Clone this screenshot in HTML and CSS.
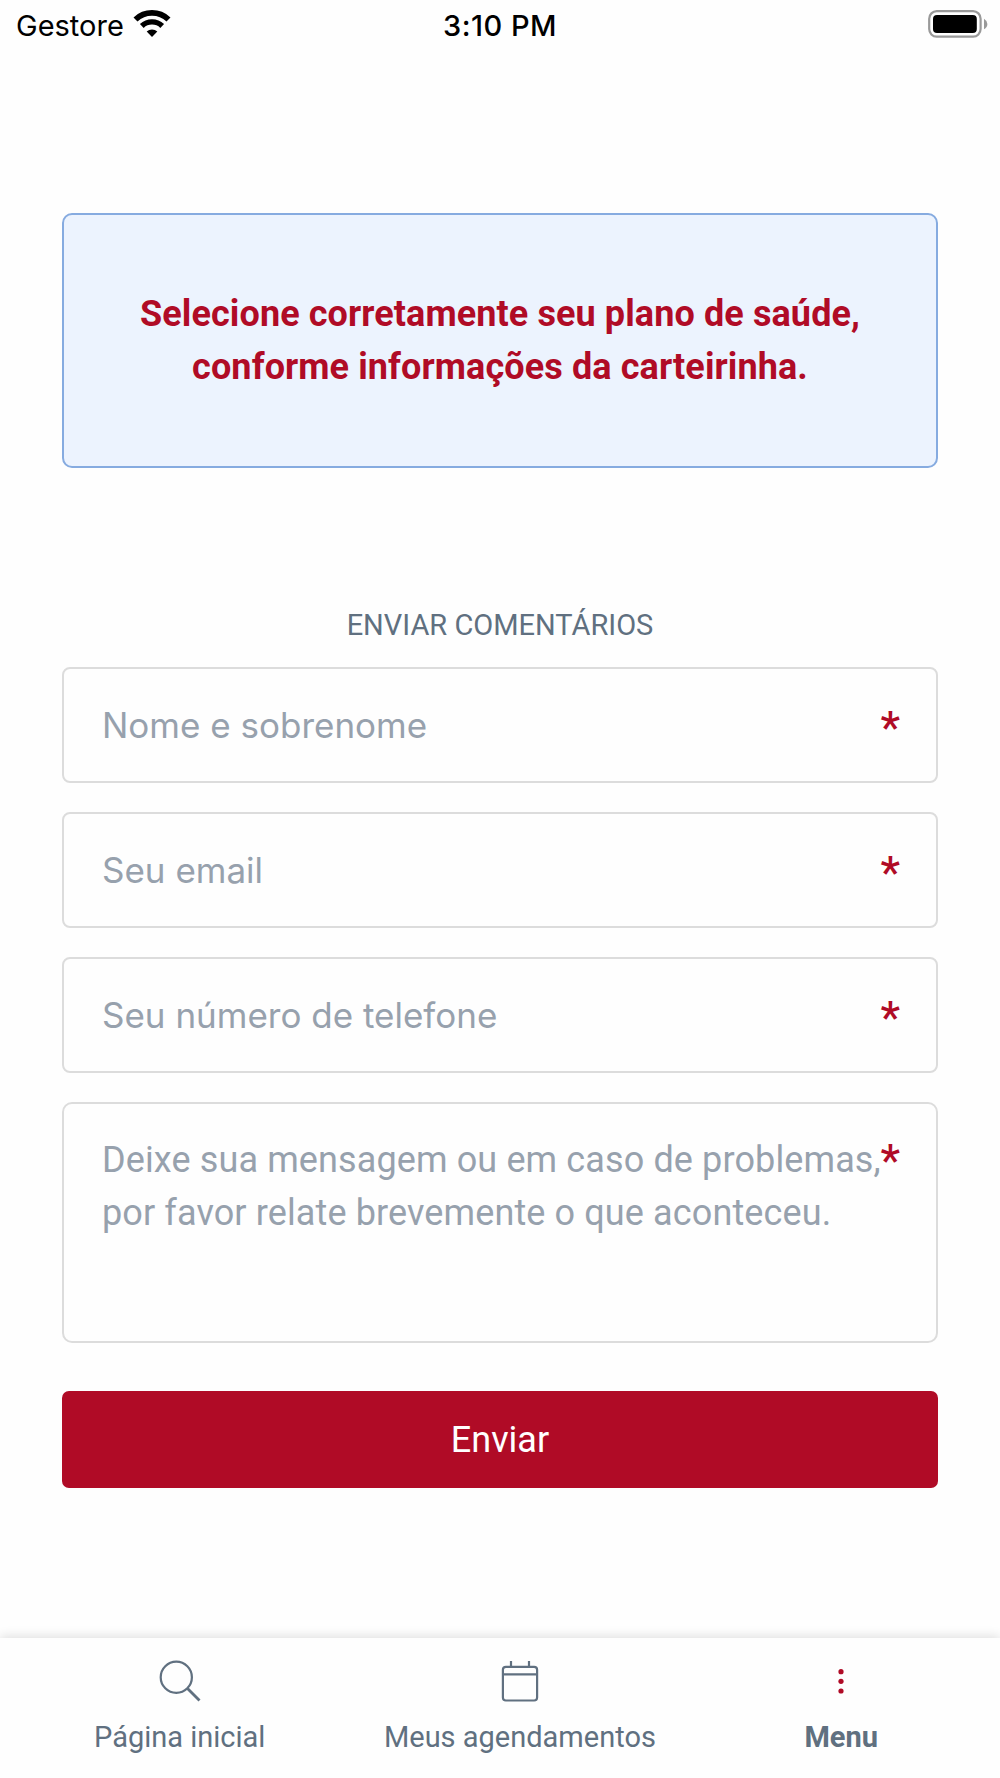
FILE: index.html
```html
<!DOCTYPE html>
<html lang="pt-BR">
<head>
    <meta charset="UTF-8">
    <meta name="viewport" content="width=device-width, initial-scale=1.0">
    <title>Enviar comentários</title>
    <link rel="stylesheet" href="styles.css">
</head>
<body>
    <div class="screen">
        <header class="status">
            <div class="carrier">
                <span>Gestore</span>
                <svg class="wifi" viewBox="0 0 38 28">
                    <path d="M2.5 9.5 A24 24 0 0 1 35.5 9.5" fill="none" stroke="#000" stroke-width="5.8"/>
                    <path d="M8.8 16 A14.8 14.8 0 0 1 29.2 16" fill="none" stroke="#000" stroke-width="5.4"/>
                    <path d="M13.7 21.6 A7.6 7.6 0 0 1 24.3 21.6 L19 27 Z"/>
                </svg>
            </div>
            <div class="time">3:10 PM</div>
            <svg class="battery" viewBox="0 0 60 28">
                <rect x="1.2" y="1.2" width="51.4" height="25.4" rx="7.5" fill="#fff" stroke="#999" stroke-width="2.2"/>
                <rect x="5" y="5" width="43.8" height="18" rx="4" fill="#000"/>
                <path d="M56 8.8 Q59.4 11 59.4 13.9 Q59.4 17 56 19.2 Z" fill="#999"/>
            </svg>
        </header>
        <main class="content">
            <div class="alert">
                <p>Selecione corretamente seu plano de saúde,<br>conforme informações da carteirinha.</p>
            </div>
            <form class="form">
                <h1 class="title">ENVIAR COMENTÁRIOS</h1>
                <div class="field">
                    <input type="text" placeholder="Nome e sobrenome">
                    <span class="required">*</span>
                </div>
                <div class="field">
                    <input type="text" placeholder="Seu email">
                    <span class="required">*</span>
                </div>
                <div class="field">
                    <input type="text" placeholder="Seu número de telefone">
                    <span class="required">*</span>
                </div>
                <div class="field message">
                    <textarea placeholder="Deixe sua mensagem ou em caso de problemas, por favor relate brevemente o que aconteceu."></textarea>
                    <span class="required">*</span>
                </div>
                <button type="button" class="send">Enviar</button>
            </form>
        </main>
        <nav class="tabs">
            <a class="tab home">
                <svg viewBox="0 0 42 42" fill="none" stroke="#607080" stroke-width="2.2">
                    <circle cx="17.3" cy="17.3" r="15.6"/>
                    <path d="M28.5 28.5 L40.5 40.5" stroke-width="2.8"/>
                </svg>
                <span>Página inicial</span>
            </a>
            <a class="tab schedule">
                <svg viewBox="0 0 42 42" fill="none" stroke="#607080" stroke-width="2.2">
                    <rect x="3.9" y="6.8" width="34.2" height="33.7" rx="3"/>
                    <path d="M4 14.3 H38 M12 1 V6.5 M30 1 V6.5"/>
                </svg>
                <span>Meus agendamentos</span>
            </a>
            <a class="tab menu">
                <svg viewBox="0 0 42 42" fill="#b00b26">
                    <circle cx="21" cy="11.7" r="2.6"/>
                    <circle cx="21" cy="21.3" r="2.6"/>
                    <circle cx="21" cy="31" r="2.6"/>
                </svg>
                <span>Menu</span>
            </a>
        </nav>
    </div>
</body>
</html>
```

FILE: styles.css
```css
* {
    margin: 0px;
    padding: 0px;
    box-sizing: border-box;
}
body {
    background-color: #fefefe;
    font-family: Roboto, sans-serif;
}
.screen {
    width: 1000px;
    height: 1778px;
    display: flex;
    flex-direction: column;
    overflow: hidden;
}
.status {
    height: 50px;
    padding: 0px 12px 0px 16px;
    display: grid;
    grid-template-columns: 1fr auto 1fr;
    align-items: center;
    font-family: Inter, sans-serif;
    font-size: 29px;
    color: #000;
}
.carrier {
    display: flex;
    align-items: center;
    gap: 9px;
}
.wifi {
    width: 38px;
    height: 28px;
    margin-bottom: 2px;
}
.time {
    margin-right: 4px;
    font-weight: 500;
    letter-spacing: 0.5px;
}
.battery {
    width: 60px;
    height: 28px;
    margin-bottom: 2px;
    justify-self: end;
}
.content {
    flex: 1;
    padding: 163px 62px 0px;
}
.alert {
    height: 255px;
    padding-top: 1px;
    display: flex;
    justify-content: center;
    align-items: center;
    background-color: #ecf3fe;
    border: 2px solid #86abe0;
    border-radius: 10px;
    color: #b00b26;
    font-size: 36px;
    font-weight: 700;
    line-height: 53px;
    letter-spacing: 0.1px;
    text-align: center;
}
.form {
    margin-top: 137px;
    display: flex;
    flex-direction: column;
}
.title {
    height: 62px;
    line-height: 40px;
    font-size: 29px;
    font-weight: 400;
    color: #607080;
    text-align: center;
}
.field {
    position: relative;
    height: 116px;
    margin-bottom: 29px;
}
.field input, .field textarea {
    display: block;
    width: 100%;
    height: 100%;
    padding: 0px 39px 1px 38px;
    background-color: #fefefe;
    border: 2px solid #dcdcdc;
    border-radius: 8px;
    outline: none;
    resize: none;
    overflow: hidden;
    font-family: Inter, sans-serif;
    font-size: 35px;
}
.field textarea {
    padding: 30px 30px 20px 38px;
    border-radius: 10px;
    font-family: Roboto, sans-serif;
    font-size: 36px;
    line-height: 53px;
    letter-spacing: 0.12px;
}
.field input::placeholder, .field textarea::placeholder {
    color: #97a1ad;
}
.message {
    height: 241px;
    margin-bottom: 48px;
}
.required {
    position: absolute;
    top: 34px;
    right: 38px;
    color: #b00b26;
    font-family: Roboto, sans-serif;
    font-size: 44px;
    font-weight: 500;
    line-height: 54px;
}
.message .required {
    top: 32px;
}
.send {
    height: 97px;
    background-color: #b00b26;
    border: none;
    border-radius: 7px;
    color: #fff;
    font-family: Roboto, sans-serif;
    font-size: 36px;
}
.tabs {
    height: 140px;
    padding: 22px 122px 0px 94px;
    display: flex;
    justify-content: space-between;
    background-color: #fefefe;
    box-shadow: 0px -2px 10px rgba(0, 0, 0, 0.12);
    color: #607080;
    font-size: 29px;
}
.tab {
    display: flex;
    flex-direction: column;
    align-items: center;
    gap: 18px;
}
.tab svg {
    width: 42px;
    height: 42px;
}
.schedule {
    margin-right: 30px;
}
.menu {
    font-weight: 700;
}
```
